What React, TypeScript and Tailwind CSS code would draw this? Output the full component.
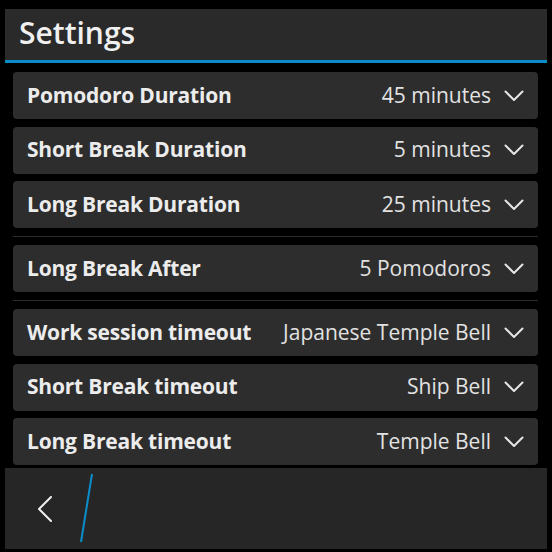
import React from 'react';

type Row = { label: string; value: string };

const groups: Row[][] = [
  [
    { label: 'Pomodoro Duration', value: '45 minutes' },
    { label: 'Short Break Duration', value: '5 minutes' },
    { label: 'Long Break Duration', value: '25 minutes' },
  ],
  [{ label: 'Long Break After', value: '5 Pomodoros' }],
  [
    { label: 'Work session timeout', value: 'Japanese Temple Bell' },
    { label: 'Short Break timeout', value: 'Ship Bell' },
    { label: 'Long Break timeout', value: 'Temple Bell' },
  ],
];

const Chevron = () => (
  <svg width="20" height="12" viewBox="0 0 20 12" className="shrink-0">
    <path d="M1.5 1.5 L10 10 L18.5 1.5" fill="none" stroke="#e6e6e6" strokeWidth="2" strokeLinecap="round" strokeLinejoin="round" />
  </svg>
);

const SettingRow = ({ label, value }: Row) => (
  <div className="flex h-[47px] items-center justify-between rounded-[4px] bg-[#2d2d2d] pl-[14px] pr-[14px]">
    <span className="text-[21px] font-bold tracking-[-0.2px] text-[#ececec]">{label}</span>
    <div className="flex items-center gap-[13px]">
      <span className="text-[21px] text-[#e2e2e2]">{value}</span>
      <Chevron />
    </div>
  </div>
);

export default function App() {
  return (
    <div
      className="flex h-[552px] w-[552px] flex-col bg-black"
      style={{ fontFamily: '"Open Sans", "Liberation Sans", sans-serif' }}
    >
      <header className="mx-[5px] mt-[9px] flex h-[54px] items-start border-b-[3px] border-[#0b8ccb] bg-[#2a2a2a] pl-[14px] pt-[6px]">
        <h1 className="text-[30px] font-semibold leading-[36px] text-[#f0f0f0]">Settings</h1>
      </header>

      <div className="mt-[9px] flex flex-col gap-[7.5px] pl-[13px] pr-[14px]">
        {groups.map((g, gi) => (
          <React.Fragment key={gi}>
            {gi > 0 && <div className="h-[2px] border-t border-[#2c2c2c]" />}
            {g.map((r) => (
              <SettingRow key={r.label} {...r} />
            ))}
          </React.Fragment>
        ))}
      </div>

      <footer className="mx-[5px] mt-[3px] flex h-[81px] items-center bg-[#262626]">
        <svg width="16" height="26" viewBox="0 0 16 26" className="ml-[32px]">
          <path d="M14 1 L2 13 L14 25" fill="none" stroke="#eeeeee" strokeWidth="2" strokeLinecap="round" strokeLinejoin="round" />
        </svg>
        <svg width="16" height="70" viewBox="0 0 16 70" className="ml-[26px] self-end mb-[6px]">
          <line x1="13" y1="1" x2="2" y2="69" stroke="#0b8ccb" strokeWidth="2" />
        </svg>
      </footer>
    </div>
  );
}
